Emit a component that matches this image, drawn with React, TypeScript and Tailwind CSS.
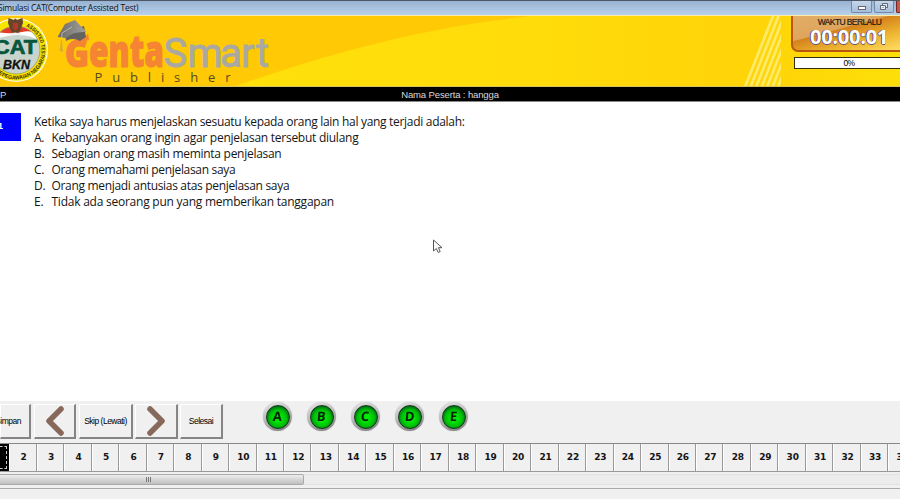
import React from "react";

const answers = [
  { key: "A", text: "Kebanyakan orang ingin agar penjelasan tersebut diulang", tracking: "tracking-[-0.26px]" },
  { key: "B", text: "Sebagian orang masih meminta penjelasan", tracking: "tracking-[-0.28px]" },
  { key: "C", text: "Orang memahami penjelasan saya", tracking: "tracking-[-0.33px]" },
  { key: "D", text: "Orang menjadi antusias atas penjelasan saya", tracking: "tracking-[-0.32px]" },
  { key: "E", text: "Tidak ada seorang pun yang memberikan tanggapan", tracking: "tracking-[-0.24px]" },
];

const numbers = Array.from({ length: 33 }, (_, i) => i + 2);

function TitleBar() {
  return (
    <div className="flex h-[15px] shrink-0 justify-between border-t border-[#4d5866] bg-gradient-to-b from-[#98b3d3] to-[#b9d0ea]">
      <span className="-ml-[2px] whitespace-nowrap font-['Open_Sans','Noto_Sans',sans-serif] text-[8.5px] leading-[13px] tracking-[-0.25px] text-[#111]">
        Simulasi CAT(Computer Assisted Test)
      </span>
      <div className="flex">
        <div className="mr-[2px] flex h-[12px] w-[21px] items-center justify-center rounded-b-[2px] border border-t-0 border-[#7489a6] bg-gradient-to-b from-[#c5d6e9] to-[#a5bedb]">
          <span className="mt-[2px] h-[4px] w-[8px] border border-[#667] bg-white" />
        </div>
        <div className="mr-[2px] flex h-[12px] w-[20px] items-center justify-center rounded-b-[2px] border border-t-0 border-[#7489a6] bg-gradient-to-b from-[#c5d6e9] to-[#a5bedb]">
          <svg width="10" height="9" viewBox="0 0 10 9" fill="#e9eff6" stroke="#5e6877">
            <path d="M3.5 1.5h5v4h-5z" />
            <path d="M1.5 3.5h5v4h-5z" />
            <path d="M3.5 5.5h1" />
          </svg>
        </div>
        <div className="h-[12px] w-[4px] rounded-bl-[2px] border-b border-l border-[#722] bg-[#c75848]" />
      </div>
    </div>
  );
}

function Brand() {
  return (
    <svg width="275" height="72" viewBox="0 15 275 72" className="block shrink-0">
      <defs>
        <clipPath id="seal">
          <circle cx="16" cy="50" r="24" />
        </clipPath>
        <path id="arcTop" d="M-9.5 50 A25.5 25.5 0 0 1 41.5 50 A25.5 25.5 0 0 1 38 63" />
        <path id="arcBottom" d="M-13.500 50 A29.500 29.500 0 0 0 45.500 50" />
        <linearGradient id="cap" x1="0" x2="1">
          <stop offset="0" stopColor="#6c6a66" />
          <stop offset="1" stopColor="#a3a19c" />
        </linearGradient>
      </defs>
      <circle cx="16" cy="50" r="32" fill="#fdfbe0" />
      <circle cx="16" cy="50" r="30.8" fill="#f7e500" />
      <g clipPath="url(#seal)">
        <rect x="-10" y="20" width="55" height="60" fill="#c9d5cc" />
        <path d="M-10 20H45V45Q36 36 20 35Q6 34 -10 42z" fill="#fff" />
        <path d="M-10 20H45V38Q34 29 22 32Q10 35 -10 31z" fill="#e33a28" />
      </g>
      <circle cx="16" cy="50" r="24" fill="none" stroke="#9a9c55" strokeWidth=".8" />
      <path d="M14 20Q15 17 17 20L22.500 18L23 23L20 31L17 34H14L11 31L8 23L8.500 18z" fill="#65462b" />
      <path d="M13 23h5v5l-2.500 3l-2.500-3z" fill="#b7372b" />
      <path d="M10 35q5-3 11 0" fill="none" stroke="#eee" strokeWidth="2" />
      <text x="-6" y="54" textLength="43" lengthAdjust="spacingAndGlyphs" fontFamily="Liberation Sans, sans-serif" fontWeight="700" fontSize="19.5" fill="#07563d" stroke="#07563d" strokeWidth=".7">
        CAT
      </text>
      <text x="3" y="69" textLength="27" lengthAdjust="spacingAndGlyphs" fontFamily="Liberation Sans, sans-serif" fontWeight="700" fontStyle="italic" fontSize="12" fill="#111" stroke="#111" strokeWidth=".3">
        BKN
      </text>
      <text fontFamily="Liberation Sans, sans-serif" fontWeight="700" fontSize="5.3" fill="#3a3300" textLength="36" lengthAdjust="spacingAndGlyphs">
        <textPath href="#arcTop" startOffset="50">ASSISTED TEST</textPath>
      </text>
      <text fontFamily="Liberation Sans, sans-serif" fontWeight="700" fontSize="5.500" fill="#3a3300" textLength="62" lengthAdjust="spacingAndGlyphs">
        <textPath href="#arcBottom" startOffset="24">KEPEGAWAIAN NEGARA</textPath>
      </text>

      <g fontFamily="Open Sans, sans-serif" fontWeight="800" fill="#f58433" stroke="#f58433" strokeWidth="1">
        <text x="65" y="66.500" textLength="24" lengthAdjust="spacingAndGlyphs" fontSize="37">
          G
        </text>
        <text x="89" y="66.500" textLength="75" lengthAdjust="spacingAndGlyphs" fontSize="44">
          enta
        </text>
      </g>
      <text x="163.500 187.500 220 241 256" y="66.500" fontFamily="Roboto, sans-serif" fontSize="40" fill="#aaa9a1" stroke="#aaa9a1" strokeWidth=".9">
        Smart
      </text>
      <path d="M79 37Q86 39 88 33L89 40Q84 42 79 40z" fill="#f58433" />
      <path d="M65 32L84 26L86 37L80 41Q72 37 66 41z" fill="#65635f" />
      <path d="M57.500 37L65 24L75 20L86.500 32Q73 31 66 38z" fill="url(#cap)" />
      <path d="M72 27L62 33L61.500 40" fill="none" stroke="#c9c4b8" strokeWidth=".8" />
      <path d="M61 40l-1.500 11l3.500 1l-1-12z" fill="#dcae2c" />
      <text x="94.500" y="82" fontFamily="Open Sans, sans-serif" fontSize="13" fill="#554b20" textLength="136" lengthAdjust="spacing">
        Publisher
      </text>
    </svg>
  );
}

function Banner() {
  return (
    <div className="relative flex h-[72px] shrink-0 justify-between border-t border-[#f9eda8] bg-[#ffca05]">
      <svg className="absolute inset-0" width="900" height="71" viewBox="0 16 900 71">
        <defs>
          <linearGradient id="sweep" x1="0" x2="1">
            <stop offset="0" stopColor="#ffe00b" />
            <stop offset=".45" stopColor="#ffdc0a" />
            <stop offset=".78" stopColor="#ffd408" />
            <stop offset="1" stopColor="#fddf08" />
          </linearGradient>
          <clipPath id="rays">
            <path d="M743 87L771 16H781V87z" />
          </clipPath>
        </defs>
        <path d="M228 89Q390 30 532 16H900V89z" fill="url(#sweep)" />
        <g clipPath="url(#rays)" stroke="#ffea68" strokeWidth="2.800">
          <path d="M745 87L773 16M750.500 87L778.500 16M756 87L784 16M761.500 87L789.500 16M767 87L795 16M772.500 87L800.500 16M778 87L806 16" />
        </g>
        <path d="M0 86.500H900" stroke="#d9c25a" />
      </svg>
      <div className="relative -mt-px">
        <Brand />
      </div>
      <div className="relative w-[109px]">
        <div className="h-[36px] w-[119px] rounded-b-[7px] border-2 border-t-0 border-[#b95710] bg-[linear-gradient(165deg,#e2ad67_0%,#dfa55c_38%,#d5831c_40%,#efb832_70%,#ffe26b_100%)] pt-[1px]">
          <div className="w-[113px] whitespace-nowrap text-center font-['Liberation_Sans',sans-serif] text-[8.5px] leading-[10px] tracking-[-0.6px] text-[#241b14] [-webkit-text-stroke:0.2px_#241b14]">
            WAKTU BERLALU
          </div>
          <div className="w-[112px] whitespace-nowrap text-center font-['Open_Sans',sans-serif] text-[20px] font-bold leading-[20px] tracking-[-0.25px] text-white [text-shadow:-1px_0_#4c438d,0_1px_#6d5570]">
            00:00:01
          </div>
        </div>
        <div className="ml-[3px] mt-[5px] h-[12px] w-[112px] border border-[#333013] bg-white pr-[2px] text-center font-['Liberation_Sans',sans-serif] text-[8.5px] leading-[10px] tracking-[-0.6px] text-black">
          0%
        </div>
      </div>
    </div>
  );
}

const buttonStyle =
  "flex h-[35px] shrink-0 items-center justify-center whitespace-nowrap border-b-2 border-r-2 border-l border-t border-b-[#858585] border-r-[#858585] border-l-white border-t-white bg-[#f0f0f0] font-['Liberation_Sans',sans-serif] text-[8.5px] tracking-[-0.5px] text-black";

function Chevron({ d }: { d: string }) {
  return (
    <svg width="18" height="30" viewBox="0 0 18 30" fill="none" stroke="#86695a" strokeWidth="5.500" strokeLinecap="round" strokeLinejoin="round">
      <path d={d} />
    </svg>
  );
}

function AnswerButton({ letter }: { letter: string }) {
  return (
    <div className="flex size-[29px] items-center justify-center rounded-full bg-[linear-gradient(160deg,#e8e8e8,#bbb_45%,#777)] shadow-[0_0_1px_#aaa]">
      <div className="flex size-[24px] items-center justify-center rounded-full border border-[#153818] bg-[radial-gradient(circle_at_50%_55%,#00ea05_20%,#00bd08_52%,#006516_75%)]">
        <span className="-skew-x-[5deg] font-['Open_Sans',sans-serif] text-[13px] font-bold leading-none text-[#032204]">
          {letter}
        </span>
      </div>
    </div>
  );
}

export default function App() {
  return (
    <main className="relative flex h-[500px] w-[900px] flex-col overflow-hidden bg-white">
      <TitleBar />
      <Banner />
      <div className="relative flex h-[15px] shrink-0 items-center justify-center border-b border-[#888] bg-black pt-[2px] font-['Liberation_Sans',sans-serif] text-[9.5px] leading-none tracking-[-0.13px] text-[#d9d9df]">
        <span className="absolute left-0">P</span>
        <span>Nama Peserta : hangga</span>
      </div>
      <section className="flex h-[299px] shrink-0 pt-[11px]">
        <div className="flex h-[28px] w-[21px] items-center bg-[#0000fd] font-['Liberation_Sans',sans-serif] text-[9px] font-bold text-white">
          <span className="-ml-[2px]">1</span>
        </div>
        <div className="ml-[13px] whitespace-nowrap pt-px font-['Open_Sans','Noto_Sans',sans-serif] text-[12px] leading-[16.1px] text-[#151515]">
          <p className="tracking-[-0.3px]">
            Ketika saya harus menjelaskan sesuatu kepada orang lain hal yang terjadi adalah:
          </p>
          {answers.map((answer) => (
            <div key={answer.key} className={`flex ${answer.tracking}`}>
              <span className="w-[17.500px]">{answer.key}.</span>
              <span>{answer.text}</span>
            </div>
          ))}
        </div>
      </section>
      <footer className="flex h-[98px] shrink-0 flex-col bg-[#f0f0f0]">
        <div className="flex h-[42px] shrink-0 pt-[3px]">
          <div className={`${buttonStyle} mr-[3px] w-[31px]`}>
            <span className="-ml-[14px]">Simpan</span>
          </div>
          <div className={`${buttonStyle} mr-[3px] w-[42px]`}>
            <Chevron d="M15 3L3 15L15 27" />
          </div>
          <div className={`${buttonStyle} mr-[2px] w-[54px]`}>Skip (Lewati)</div>
          <div className={`${buttonStyle} mr-[2px] w-[43px]`}>
            <Chevron d="M3 3L15 15L3 27" />
          </div>
          <div className={`${buttonStyle} w-[43px]`}>Selesai</div>
          <div className="-mt-[2px] ml-[40px] flex gap-[15px]">
            {answers.map((answer) => (
              <AnswerButton key={answer.key} letter={answer.key} />
            ))}
          </div>
        </div>
        <div className="flex h-[29px] shrink-0 overflow-hidden border-b border-t border-b-[#999] border-t-[#888]">
          <div className="w-[9.300px] shrink-0 bg-black py-[2px] pr-[2px]">
            <div className="h-full border border-l-0 border-dashed border-[#ccc]" />
          </div>
          {numbers.map((n) => (
            <div
              key={n}
              className="flex w-[27.480px] shrink-0 items-center justify-center border-l border-r border-l-white border-r-[#999] pl-px font-['DejaVu_Sans',sans-serif] text-[9px] font-bold tracking-[-0.2px] text-[#151515]"
            >
              {n}
            </div>
          ))}
        </div>
        <div className="mt-[2px] flex h-[11px] shrink-0 border-b border-t border-[#e2e2e2] bg-[#ececec]">
          <div className="-my-px flex h-[11px] w-[304px] items-center justify-center rounded-r-[2px] border border-l-0 border-[#aaa] bg-gradient-to-b from-[#eee] to-[#bfbfc1] pr-[6px]">
            <span className="flex gap-px">
              <i className="h-[5px] w-px bg-[#777]" />
              <i className="h-[5px] w-px bg-[#777]" />
              <i className="h-[5px] w-px bg-[#777]" />
            </span>
          </div>
        </div>
        <div className="mt-[3px] border-t border-[#aaa]" />
      </footer>
      <svg className="absolute left-[433px] top-[239px]" width="10" height="15" viewBox="0 0 10 15">
        <path d="M.5 1V12L3.300 9.500L5.200 13.500L7.200 12.500L5.400 8.700H9z" fill="#fff" stroke="#555" />
      </svg>
    </main>
  );
}
